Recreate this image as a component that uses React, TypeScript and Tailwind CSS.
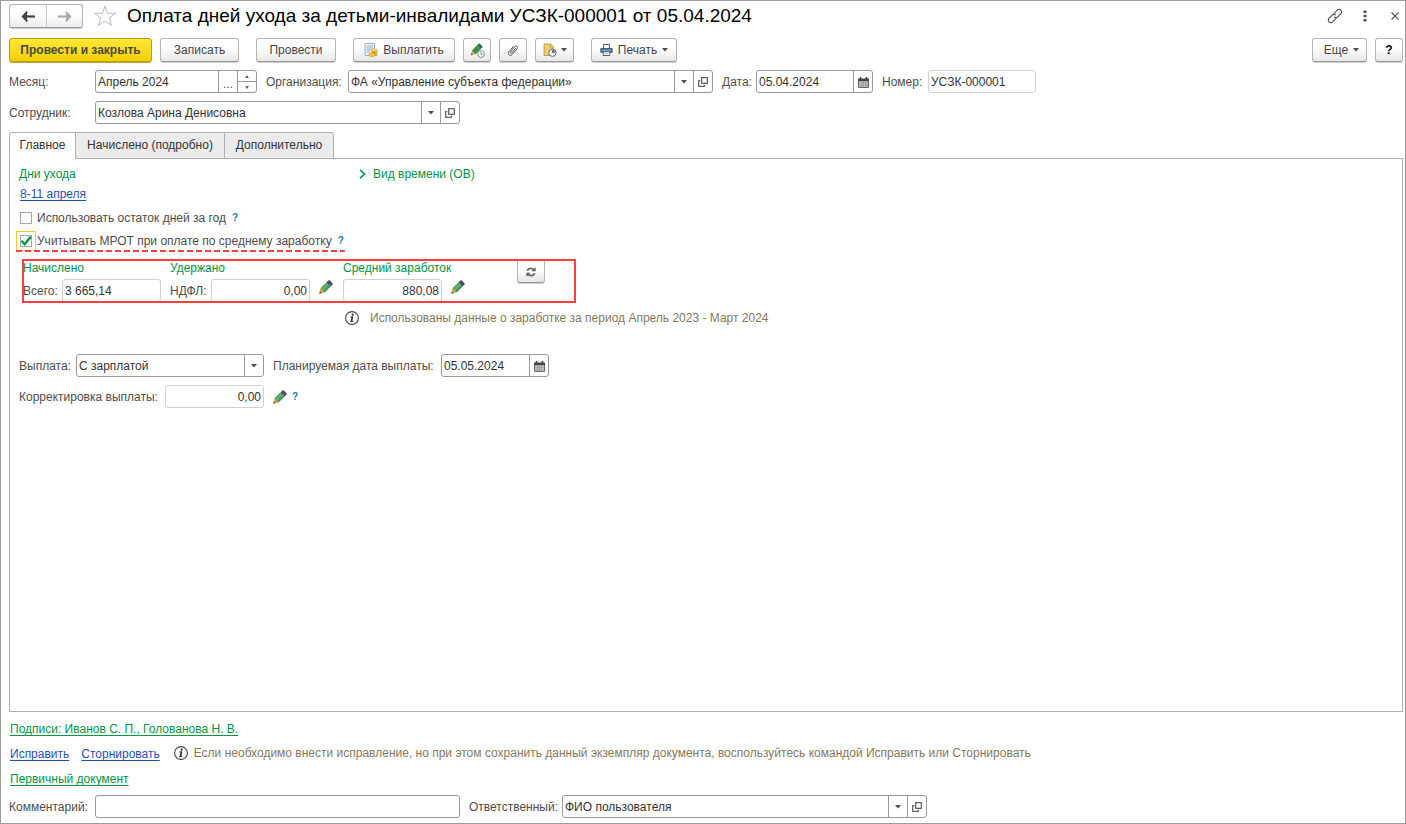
import { useState } from 'react';
import type { ReactNode } from 'react';
import clsx from 'clsx';

const BTN =
  'flex h-6 shrink-0 items-center justify-center rounded-[3px] border border-[#b3b3b3] border-b-[#999] bg-linear-to-b from-white from-40% to-[#e6e6e6] text-[#444] shadow-[0_1px_0_#d0d0d0]';

function Caret() {
  return (
    <svg width="6" height="4" viewBox="0 0 6 4" aria-hidden="true">
      <path d="M0 0h6L3 3.6z" fill="#4d4d4d" />
    </svg>
  );
}

function OpenIcon() {
  return (
    <svg width="10" height="10" viewBox="0 0 10 10" fill="none" stroke="#666" strokeWidth="1.300" aria-hidden="true">
      <path d="M3.700.7h5.600v5.600H3.700z" />
      <path d="M2.300 3.700H.7v5.600h5.600V7.700" />
    </svg>
  );
}

function CalendarIcon() {
  return (
    <svg width="11" height="11" viewBox="0 0 11 11" aria-hidden="true">
      <path d="M.5 3h10v7.500H.5z" fill="#c9c9c9" stroke="#666" />
      <path d="M0 1.500h11v2.700H0z" fill="#444" />
      <path d="M2.500 0v2.500M8.500 0v2.500" stroke="#444" strokeWidth="1.600" />
      <path d="M1 6.200h9M1 8.300h9M3.300 4.500v5.500M5.500 4.500v5.500M7.700 4.500v5.500" stroke="#8b8b8b" strokeWidth=".6" />
    </svg>
  );
}

function PencilIcon() {
  return (
    <svg width="14" height="14" viewBox="0 0 14 14" aria-hidden="true">
      <path d="M.3 13.700 1.500 8.300 5.700 12.500z" fill="#d9a24e" />
      <path d="M.3 13.700l.6-2.400 1.800 1.800z" fill="#6b5236" />
      <path d="M1.500 8.300 7.400 2.400l4.200 4.200-5.900 5.900z" fill="#3f9150" />
      <path d="M2.500 8.700 8.200 3l2 2-5.700 5.700z" fill="#5cb56c" />
      <path d="M7.400 2.400 9.300.6c.5-.5 1.100-.5 1.600 0l2.500 2.500c.5.500.5 1.100 0 1.600l-1.800 1.900z" fill="#4a5068" />
    </svg>
  );
}

function InfoIcon() {
  return (
    <svg width="14" height="14" viewBox="0 0 14 14" aria-hidden="true">
      <circle cx="7" cy="7" r="6.400" fill="none" stroke="#444" strokeWidth="1.100" />
      <circle cx="7.700" cy="3.700" r="1.100" fill="#333" />
      <path d="M5.300 6h2.700M5.200 10.500h3.300" fill="none" stroke="#333" strokeWidth=".9" />
      <path d="M6.500 5.600h1.800l-1 4.900H5.600z" fill="#333" />
    </svg>
  );
}

function PayIcon() {
  return (
    <svg width="14" height="14" viewBox="0 0 14 14" aria-hidden="true">
      <path d="M1 .5h9.500v12H1z" fill="#eef3f7" stroke="#9fb0bf" />
      <path d="M2.800 3h6M2.800 5h6M2.800 7h4M2.800 9h3" stroke="#8ba2b5" strokeWidth=".9" />
      <path d="M7.500 7.500h5.800V13H7.500z" fill="#e9b23c" />
      <ellipse cx="10.400" cy="7.300" rx="3" ry="1.300" fill="#fbdc82" stroke="#c88e23" strokeWidth=".6" />
      <path d="M5 11.200c0-.8 1.300-1.300 3-1.300s3 .5 3 1.300v1.400c0 .7-1.300 1.200-3 1.200s-3-.5-3-1.200z" fill="#f0bd4c" stroke="#c88e23" strokeWidth=".6" />
      <path d="M7.600 9c1.700 1 4 1 5.600 0" fill="none" stroke="#c88e23" strokeWidth=".6" />
    </svg>
  );
}

function PencilClockIcon() {
  return (
    <svg width="15" height="15" viewBox="0 0 15 15" aria-hidden="true">
      <path d="M.8 12.200 1.900 7.400l3.800 3.800z" fill="#e0a75a" />
      <path d="M.8 12.200l.6-2 1.400 1.400z" fill="#4d4038" />
      <path d="M1.900 7.400 7 2.300l3.800 3.800-5.100 5.100z" fill="#35924a" />
      <path d="M7 2.300 8.600.8c.4-.4.900-.4 1.300 0l2.400 2.400c.4.400.4.900 0 1.300l-1.500 1.600z" fill="#2e6d3f" />
      <circle cx="11" cy="11" r="3.400" fill="#fff" stroke="#7f8e99" />
      <path d="M11 9v2.200h1.700" fill="none" stroke="#5f6e79" strokeWidth=".9" />
    </svg>
  );
}

function ClipIcon() {
  return (
    <svg width="12" height="13" viewBox="0 0 12 13" fill="none" stroke="#555" strokeLinecap="round" aria-hidden="true">
      <path d="M8.900 4.200 4.700 9.100c-.8.900-2.100-.1-1.300-1.100l4.500-5.300c1.400-1.600 3.700.2 2.300 1.900L5.300 10.500c-2.100 2.400-5.400-.3-3.400-2.800l4.500-5.300" />
    </svg>
  );
}

function DocClockIcon() {
  return (
    <svg width="14" height="14" viewBox="0 0 14 14" aria-hidden="true">
      <path d="M1 1h6.500L10.500 4v8.500H1z" fill="#f3cf6b" stroke="#b98f35" strokeWidth=".8" />
      <path d="M7.500 1v3h3z" fill="#fff2c4" stroke="#b98f35" strokeWidth=".7" />
      <circle cx="9.500" cy="9.700" r="3.700" fill="#fff" stroke="#4d6d93" />
      <path d="M9.500 9.700V6.700a3 3 0 0 1 3 3z" fill="#d85a54" />
      <path d="M9.500 7.200v2.500h2.200" fill="none" stroke="#35557c" strokeWidth=".8" />
    </svg>
  );
}

function PrinterIcon() {
  return (
    <svg width="13" height="12" viewBox="0 0 13 12" aria-hidden="true">
      <path d="M3.500.5h6v4h-6z" fill="#fff" stroke="#4a6076" />
      <path d="M1.500 4h10c.7 0 1.200.5 1.200 1.200v3.600H.3V5.200C.3 4.500.8 4 1.500 4z" fill="#43617e" />
      <path d="M1.500 6.200h10" stroke="#b4c6d6" strokeWidth=".9" />
      <path d="M3.200 7.700h6.600v3.800H3.200z" fill="#fff" stroke="#4a6076" />
      <path d="M4.500 9.500h4" stroke="#9cafbf" strokeWidth=".9" />
    </svg>
  );
}

function RefreshIcon() {
  return (
    <svg width="10" height="10" viewBox="0 0 10 10" fill="none" stroke="#666" strokeWidth="1.800" aria-hidden="true">
      <path d="M1.200 3.800C1.800 2.200 3.100 1.400 4.800 1.400c1.200 0 2.200.4 2.900 1.200M8.800 6.200C8.200 7.800 6.900 8.600 5.200 8.600c-1.200 0-2.200-.4-2.900-1.200" />
      <path d="M9.600.3v4H5.600zM.4 9.700v-4h4z" fill="#555" stroke="none" />
    </svg>
  );
}

function ArrowIcon({ color, right }: { color: string; right?: boolean }) {
  return (
    <svg width="15" height="11" viewBox="0 0 15 11" className={clsx(right && 'rotate-180')} aria-hidden="true">
      <path d="M14 5.500H4" stroke={color} strokeWidth="2.200" />
      <path d="M6.200.6 1.700 5.500l4.500 4.900" fill="none" stroke={color} strokeWidth="1.800" />
      <path d="M6 1.500v8L1.500 5.500z" fill={color} />
    </svg>
  );
}

function Hint() {
  return (
    <button type="button" aria-label="Подсказка" className="text-[10px] font-bold text-[#1b75bb]">
      ?
    </button>
  );
}

function DropField({ id, value, open, className }: { id: string; value: string; open?: boolean; className: string }) {
  return (
    <div className={clsx('flex h-[23px] min-w-0 rounded-[3px] border border-[#999] bg-white', className)}>
      <div className="relative min-w-0 flex-1">
        <select id={id} className="h-full w-full appearance-none truncate bg-transparent pr-5 pl-0.5 text-[#333] outline-none">
          <option>{value}</option>
        </select>
        <span className="pointer-events-none absolute inset-y-0 right-0 flex w-[19px] items-center justify-center border-l border-[#999]">
          <Caret />
        </span>
      </div>
      {open && (
        <button type="button" aria-label="Открыть" className="flex w-[19px] items-center justify-center border-l border-[#999]">
          <OpenIcon />
        </button>
      )}
    </div>
  );
}

function DateField({ id, value, className }: { id: string; value: string; className: string }) {
  return (
    <div className={clsx('flex h-[23px] rounded-[3px] border border-[#999] bg-white', className)}>
      <input id={id} defaultValue={value} className="min-w-0 flex-1 pl-0.5 text-[#333] outline-none" />
      <button type="button" aria-label="Выбрать дату" className="flex w-[19px] items-center justify-center border-l border-[#999] pt-0.5">
        <CalendarIcon />
      </button>
    </div>
  );
}

function ReadField({ id, value, className }: { id: string; value: string; className: string }) {
  return (
    <input
      id={id}
      readOnly
      defaultValue={value}
      className={clsx('h-[23px] rounded-[3px] border border-[#d0d0d0] bg-white px-0.5 text-[#333] outline-none', className)}
    />
  );
}

function CheckRow({ checked, onChange, children }: { checked: boolean; onChange: (v: boolean) => void; children: ReactNode }) {
  return (
    <label className="flex items-center gap-px">
      <span
        className={clsx(
          'relative flex size-5 items-center justify-center border',
          checked ? 'border-[#f5c736]' : 'border-transparent',
        )}
      >
        <input
          type="checkbox"
          checked={checked}
          onChange={(e) => onChange(e.target.checked)}
          className="size-3 appearance-none border border-[#a6a6a6] bg-white"
        />
        {checked && (
          <svg width="12" height="11" viewBox="0 0 12 11" className="pointer-events-none absolute" aria-hidden="true">
            <path d="M1.500 4.700 4.700 8.200 10.800.8" fill="none" stroke="#009646" strokeWidth="2.400" />
          </svg>
        )}
      </span>
      {children}
    </label>
  );
}

const TABS = [
  { title: 'Главное', width: 'w-[67px]' },
  { title: 'Начислено (подробно)', width: 'w-[150px]' },
  { title: 'Дополнительно', width: 'w-[110px]' },
];

export default function App() {
  const [tab, setTab] = useState(0);
  const [useRest, setUseRest] = useState(false);
  const [useMrot, setUseMrot] = useState(true);

  return (
    <div className="flex min-h-screen flex-col border border-[#9c9c9c] bg-white pt-[3px] pr-0.5 pb-[5px] pl-2 font-['Liberation_Sans',Arial,sans-serif] text-xs text-[#4d4d4d]">
      <header className="flex h-6 items-center">
        <div className="flex h-6 rounded-[3px] border border-[#b3b3b3] border-b-[#999] bg-linear-to-b from-white from-40% to-[#ececec] shadow-[0_1px_0_#d0d0d0]">
          <button type="button" aria-label="Назад" className="flex w-9 items-center justify-center">
            <ArrowIcon color="#444" />
          </button>
          <button type="button" aria-label="Вперед" className="flex w-9 items-center justify-center border-l border-[#c8c8c8]">
            <ArrowIcon color="#aaa" right />
          </button>
        </div>
        <button type="button" aria-label="В избранное" className="ml-2.5">
          <svg width="24" height="22" viewBox="0 0 24 22" aria-hidden="true">
            <path d="M12 1.200 14.600 8.300h7.900l-6.300 4.700 2.400 7.500-6.600-4.600-6.600 4.600L7.800 13 1.500 8.300h7.900z" fill="#fff" stroke="#b4bcc4" />
          </svg>
        </button>
        <h1 className="ml-2.5 flex-1 truncate text-[19px] leading-6 text-black">
          Оплата дней ухода за детьми-инвалидами УСЗК-000001 от 05.04.2024
        </h1>
        <button type="button" aria-label="Ссылка">
          <svg width="16" height="16" viewBox="0 0 16 16" fill="none" stroke="#555" strokeWidth="1.200" strokeLinecap="round" aria-hidden="true">
            <path d="M7.200 5.300 10.300 2.200a2.500 2.500 0 0 1 3.600 3.600L10.800 8.900a2.500 2.500 0 0 1-3.200.3" />
            <path d="M8.800 10.700 5.700 13.800a2.500 2.500 0 0 1-3.600-3.600L5.200 7.100a2.500 2.500 0 0 1 3.200-.3" />
          </svg>
        </button>
        <button type="button" aria-label="Меню" className="ml-5">
          <svg width="4" height="12" viewBox="0 0 4 12" fill="#555" aria-hidden="true">
            <path d="M.5.500h3v2.500h-3zM.5 4.800h3v2.500h-3zM.5 9h3v2.500h-3z" />
          </svg>
        </button>
        <button type="button" aria-label="Закрыть" className="mr-1 ml-6">
          <svg width="8" height="8" viewBox="0 0 8 8" stroke="#555" strokeWidth="1.100" aria-hidden="true">
            <path d="M.5.500l7 7M7.500.500l-7 7" />
          </svg>
        </button>
      </header>

      <div className="mt-2.5 flex items-center gap-[17px]">
        <div className="flex gap-2">
          <button
            type="button"
            className="h-6 w-[143px] rounded-[3px] border border-[#b8a000] bg-linear-to-b from-[#ffe833] to-[#f2d000] font-bold text-[#4a4a3c] shadow-[0_1px_0_#b5a33c]"
          >
            Провести и закрыть
          </button>
          <button type="button" className={clsx(BTN, 'w-[79px]')}>Записать</button>
        </div>
        <button type="button" className={clsx(BTN, 'w-20')}>Провести</button>
        <div className="flex gap-2">
          <button type="button" className={clsx(BTN, 'w-[102px] gap-[5px]')}>
            <PayIcon />
            Выплатить
          </button>
          <button type="button" aria-label="Исправить позже" className={clsx(BTN, 'w-7')}><PencilClockIcon /></button>
          <button type="button" aria-label="Присоединенные файлы" className={clsx(BTN, 'w-7')}><ClipIcon /></button>
          <button type="button" aria-label="Создать на основании" className={clsx(BTN, 'w-[39px] gap-1')}>
            <DocClockIcon />
            <Caret />
          </button>
        </div>
        <button type="button" className={clsx(BTN, 'w-[86px] gap-[5px]')}>
          <PrinterIcon />
          Печать
          <Caret />
        </button>
        <div className="ml-auto flex gap-2">
          <button type="button" className={clsx(BTN, 'w-[55px] gap-[5px] pl-1')}>
            Еще
            <Caret />
          </button>
          <button type="button" aria-label="Справка" className={clsx(BTN, 'w-7 font-bold text-black')}>?</button>
        </div>
      </div>

      <div className="mt-2 flex items-center gap-[9px]">
        <div className="flex items-center">
          <label htmlFor="month" className="w-[86px]">Месяц:</label>
          <div className="flex h-[23px] w-[162px] rounded-[3px] border border-[#999]">
            <input id="month" defaultValue="Апрель 2024" className="min-w-0 flex-1 pl-0.5 text-[#333] outline-none" />
            <button type="button" aria-label="Выбрать месяц" className="w-[19px] border-l border-[#999] pt-1">...</button>
            <div className="flex w-[19px] flex-col border-l border-[#999]">
              <button type="button" aria-label="Следующий месяц" className="flex flex-1 items-center justify-center border-b border-[#999]">
                <svg width="4" height="3" viewBox="0 0 4 3" aria-hidden="true"><path d="M0 3h4L2 0z" fill="#666" /></svg>
              </button>
              <button type="button" aria-label="Предыдущий месяц" className="flex flex-1 items-center justify-center">
                <svg width="4" height="3" viewBox="0 0 4 3" aria-hidden="true"><path d="M0 0h4L2 3z" fill="#666" /></svg>
              </button>
            </div>
          </div>
        </div>
        <div className="flex min-w-0 items-center">
          <label htmlFor="org" className="w-[82px] shrink-0">Организация:</label>
          <DropField id="org" value="ФА «Управление субъекта федерации»" open className="w-[365px]" />
        </div>
        <div className="flex items-center">
          <label htmlFor="date" className="w-[34px]">Дата:</label>
          <DateField id="date" value="05.04.2024" className="w-[117px]" />
        </div>
        <div className="flex items-center">
          <label htmlFor="number" className="w-[46px]">Номер:</label>
          <ReadField id="number" value="УСЗК-000001" className="w-[108px]" />
        </div>
      </div>

      <div className="mt-2 flex items-center">
        <label htmlFor="employee" className="w-[86px]">Сотрудник:</label>
        <DropField id="employee" value="Козлова Арина Денисовна" open className="w-[365px]" />
      </div>

      <div role="tablist" className="relative mt-2 -mb-px flex h-[27px]">
        {TABS.map((t, i) => (
          <button
            key={t.title}
            type="button"
            role="tab"
            aria-selected={i === tab}
            onClick={() => setTab(i)}
            className={clsx(
              'border border-[#b0b0b0] pb-0.5 text-[#333] first:rounded-tl-[3px] last:rounded-tr-[3px]',
              t.width,
              i > 0 && '-ml-px',
              i === tab ? 'border-b-white bg-white' : 'bg-[#ebebeb]',
            )}
          >
            {t.title}
          </button>
        ))}
      </div>

      <main className="flex-1 border border-[#b0b0b0] pt-[5px] pl-[9px]">
        <div className="flex h-5 items-center text-[#009646]">
          <h2 className="w-[340px]">Дни ухода</h2>
          <button type="button" className="flex items-center gap-[7px]">
            <svg width="7" height="10" viewBox="0 0 7 10" aria-hidden="true">
              <path d="M1 .8 5.600 5 1 9.200" fill="none" stroke="#009646" strokeWidth="1.600" />
            </svg>
            Вид времени (ОВ)
          </button>
        </div>
        <div className="flex h-5 items-center pl-px">
          <a href="#days" className="text-[#1f50b5] underline underline-offset-2">8-11 апреля</a>
        </div>

        <div className="mt-1 -ml-[3px] flex h-5 items-center gap-1.5">
          <CheckRow checked={useRest} onChange={setUseRest}>Использовать остаток дней за год</CheckRow>
          <Hint />
        </div>
        <div className="mt-[3px] -ml-[3px] flex">
          <div className="relative flex h-5 items-center gap-1.5 pr-px">
            <CheckRow checked={useMrot} onChange={setUseMrot}>Учитывать МРОТ при оплате по среднему заработку</CheckRow>
            <Hint />
            <svg className="pointer-events-none absolute -bottom-px left-0 h-0.5 w-full" aria-hidden="true">
              <line x1="0" y1="1" x2="100%" y2="1" stroke="#f84040" strokeWidth="2" strokeDasharray="6 3" />
            </svg>
          </div>
        </div>

        <section className="relative mt-2 ml-1 flex h-11 w-[552px] max-w-full">
          <div className="w-[147px]">
            <h2 className="flex h-5 items-center pb-0.5 text-[#009646]">Начислено</h2>
            <div className="flex items-center">
              <label htmlFor="total" className="w-[39px]">Всего:</label>
              <ReadField id="total" value="3 665,14" className="w-[99px]" />
            </div>
          </div>
          <div className="w-[173px]">
            <h2 className="flex h-5 items-center pb-0.5 text-[#009646]">Удержано</h2>
            <div className="flex items-center">
              <label htmlFor="ndfl" className="w-[41px]">НДФЛ:</label>
              <ReadField id="ndfl" value="0,00" className="w-[99px] text-right" />
              <button type="button" aria-label="Изменить НДФЛ" className="mb-2 ml-[9px]"><PencilIcon /></button>
            </div>
          </div>
          <div className="w-[174px]">
            <label htmlFor="average" className="flex h-5 items-center pb-0.5 text-[#009646]">Средний заработок</label>
            <div className="flex items-center">
              <ReadField id="average" value="880,08" className="w-[99px] text-right" />
              <button type="button" aria-label="Изменить средний заработок" className="mb-2 ml-[9px]"><PencilIcon /></button>
            </div>
          </div>
          <button type="button" aria-label="Обновить" className={clsx(BTN, 'w-7 pt-0.5')}><RefreshIcon /></button>
          <div className="pointer-events-none absolute inset-y-0 -right-px -left-px border-2 border-[#f84040]" />
        </section>

        <div className="mt-[5px] flex h-5 items-center gap-[11px] pl-[326px] text-[#86795c]">
          <InfoIcon />
          Использованы данные о заработке за период Апрель 2023 - Март 2024
        </div>

        <div className="mt-[26px] flex items-center gap-[9px]">
          <div className="flex items-center">
            <label htmlFor="payment" className="w-[57px]">Выплата:</label>
            <DropField id="payment" value="С зарплатой" className="w-[188px]" />
          </div>
          <div className="flex items-center">
            <label htmlFor="planned" className="w-[168px]">Планируемая дата выплаты:</label>
            <DateField id="planned" value="05.05.2024" className="w-[108px]" />
          </div>
        </div>
        <div className="mt-2 flex items-center">
          <label htmlFor="correction" className="w-[146px]">Корректировка выплаты:</label>
          <ReadField id="correction" value="0,00" className="w-[99px] text-right" />
          <button type="button" aria-label="Изменить корректировку" className="mr-[5px] ml-[9px]"><PencilIcon /></button>
          <Hint />
        </div>
      </main>

      <footer>
        <div className="mt-[7px] flex h-5 items-center pl-px">
          <a href="#signatures" className="text-[#009646] underline underline-offset-2">Подписи: Иванов С. П., Голованова Н. В.</a>
        </div>
        <div className="mt-[5px] flex h-5 items-center pl-px">
          <a href="#fix" className="text-[#1f50b5] underline underline-offset-2">Исправить</a>
          <a href="#reverse" className="ml-3 text-[#1f50b5] underline underline-offset-2">Сторнировать</a>
          <div className="ml-3.5 flex items-center gap-1.5 pb-0.5 text-[#86795c]">
            <InfoIcon />
            Если необходимо внести исправление, но при этом сохранить данный экземпляр документа, воспользуйтесь командой Исправить или Сторнировать
          </div>
        </div>
        <div className="mt-[5px] flex h-5 items-center pl-px">
          <a href="#primary" className="text-[#009646] underline underline-offset-2">Первичный документ</a>
        </div>
        <div className="mt-1.5 flex items-center gap-[9px]">
          <div className="flex items-center">
            <label htmlFor="comment" className="w-[86px]">Комментарий:</label>
            <input id="comment" className="h-[23px] w-[365px] rounded-[3px] border border-[#999] px-0.5 text-[#333] outline-none" />
          </div>
          <div className="flex min-w-0 items-center">
            <label htmlFor="responsible" className="w-[93px] shrink-0">Ответственный:</label>
            <DropField id="responsible" value="ФИО пользователя" open className="w-[365px]" />
          </div>
        </div>
      </footer>
    </div>
  );
}
